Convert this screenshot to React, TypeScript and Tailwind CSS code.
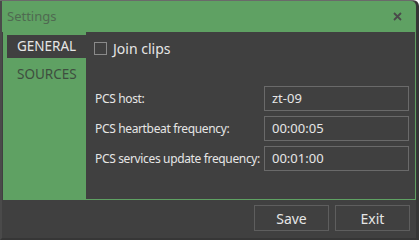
export default function App() {
  const font = { fontFamily: '"Noto Sans", "Open Sans", sans-serif' };
  const rows = [
    { label: "PCS host:", value: "zt-09" },
    { label: "PCS heartbeat frequency:", value: "00:00:05" },
    { label: "PCS services update frequency:", value: "00:01:00" },
  ];

  return (
    <div className="w-[420px] h-[241px] bg-white" style={font}>
      <div className="w-[419px] h-[240px] flex flex-col bg-[#404040] border-t border-t-[#6a6a6a] border-l-2 border-l-[#4a4a4a] border-r-[3px] border-r-[#363636] border-b-2 border-b-[#363636] rounded-tr-[6px]">
        {/* title bar */}
        <div className="h-[31px] shrink-0 flex items-center justify-between bg-[#5fa163] pl-[5px] pr-[14px] rounded-tr-[5px]">
          <span className="text-[13px] text-[#4f6a51]">Settings</span>
          <svg width="9" height="9" viewBox="0 0 9 9" className="text-[#4a4a4a]">
            <path d="M1 1 L8 8 M8 1 L1 8" stroke="currentColor" strokeWidth="1.8" />
          </svg>
        </div>

        {/* body */}
        <div className="h-[168px] shrink-0 flex ml-px border-r border-b border-[#5fa163]">
          <div className="w-[83px] bg-[#5fa163] pt-[3px]">
            <div className="ml-[4px] h-[23px] bg-[#404040] flex items-center pl-[10px] text-[13.5px] text-[#e6e6e6]">
              GENERAL
            </div>
            <div className="h-[32px] flex items-center pl-[14px] text-[13.5px] text-[#3e4e3f]">
              SOURCES
            </div>
          </div>

          <div className="flex-1 pl-[8px] pt-[10px]">
            <label className="flex items-center gap-[6px] h-[13px]">
              <span className="w-[13px] h-[13px] border border-[#8a8a8a]" />
              <span className="text-[14px] text-[#e6e6e6]">Join clips</span>
            </label>

            <div className="mt-[31px] ml-px grid grid-cols-[169px_145px] gap-y-[5px] items-center">
              {rows.map((r) => (
                <div key={r.label} className="contents">
                  <span className="text-[12px] tracking-[-0.35px] text-[#e6e6e6] whitespace-nowrap">
                    {r.label}
                  </span>
                  <div className="h-[25px] border border-[#6a6a6a] flex items-center pl-[7px] text-[13px] text-[#e6e6e6]">
                    {r.value}
                  </div>
                </div>
              ))}
            </div>
          </div>
        </div>

        {/* footer */}
        <div className="flex justify-end gap-[6px] pt-[5px] pr-[6px]">
          <button className="w-[75px] h-[26px] border border-[#5e5e5e] text-[14px] text-[#e6e6e6]">
            Save
          </button>
          <button className="w-[75px] h-[26px] border border-[#5e5e5e] text-[14px] text-[#e6e6e6]">
            Exit
          </button>
        </div>
      </div>
    </div>
  );
}
